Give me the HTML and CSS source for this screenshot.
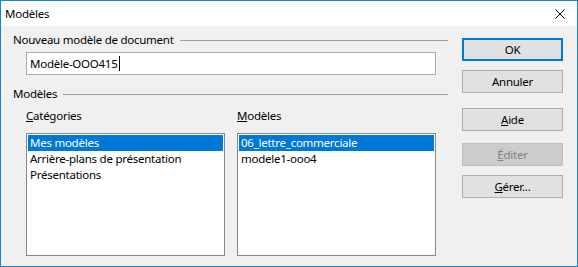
FILE: index.html
```html
<!DOCTYPE html>
<html lang="fr">

<head>
    <meta charset="UTF-8">
    <title>Modèles</title>
    <link rel="stylesheet" href="styles.css">
</head>

<body>
    <div class="dialog">
        <div class="titlebar">
            <span class="title">Modèles</span>
            <svg class="close" width="10" height="10" viewBox="0 0 10 10">
                <path d="M0.5 0.5 L9.5 9.5 M9.5 0.5 L0.5 9.5" stroke="#000" stroke-width="1" fill="none" />
            </svg>
        </div>

        <div class="content">
            <div class="main">
                <div class="group-title">Nouveau modèle de document</div>
                <div class="name-input">Modèle-OOO415<span class="caret"></span></div>

                <div class="group-title second-group">Modèles</div>
                <div class="columns">
                    <div class="column">
                        <div class="list-label"><u>C</u>atégories</div>
                        <div class="list">
                            <div class="row selected">Mes modèles</div>
                            <div class="row">Arrière-plans de présentation</div>
                            <div class="row">Présentations</div>
                        </div>
                    </div>
                    <div class="column">
                        <div class="list-label"><u>M</u>odèles</div>
                        <div class="list">
                            <div class="row selected">06_lettre_commerciale</div>
                            <div class="row">modele1-ooo4</div>
                        </div>
                    </div>
                </div>
            </div>

            <div class="buttons">
                <button class="btn btn-ok">OK</button>
                <button class="btn btn-cancel">Annuler</button>
                <button class="btn btn-help"><u>A</u>ide</button>
                <button class="btn btn-edit" disabled><u>É</u>diter</button>
                <button class="btn btn-manage"><u>G</u>érer...</button>
            </div>
        </div>
    </div>
</body>

</html>
```

FILE: styles.css
```css
body {
    margin: 0;
    font-family: "Noto Sans", "Open Sans", sans-serif;
    font-size: 11.5px;
    letter-spacing: -0.25px;
    color: #000;
    background: #f0f0f0;
}

.dialog {
    width: 578px;
    height: 267px;
    box-sizing: border-box;
    border: 1px solid #1883d7;
    display: flex;
    flex-direction: column;
}

.titlebar {
    height: 25px;
    background: #fff;
    display: flex;
    align-items: center;
    justify-content: space-between;
    padding: 0 12px 0 4px;
}

.title {
    line-height: 16px;
}

.content {
    flex: 1;
    background: #f0f0f0;
    display: flex;
    padding: 6px 0 0 12px;
}

.main {
    width: 435px;
}

.group-title {
    display: flex;
    align-items: center;
    height: 16px;
    line-height: 16px;
    white-space: nowrap;
}

.group-title::after {
    content: "";
    flex: 1;
    height: 1px;
    background: #a0a0a0;
    margin-left: 6px;
}

.second-group {
    margin-top: 11px;
}

.name-input {
    display: flex;
    align-items: center;
    margin: 4px 0 0 13px;
    width: 410px;
    height: 23px;
    box-sizing: border-box;
    border: 1px solid #adadad;
    background: #fff;
    padding: 0 3px;
}

.caret {
    width: 1px;
    height: 15px;
    background: #000;
    margin-left: 1px;
}

.columns {
    display: flex;
    gap: 12px;
    padding-left: 13px;
    margin-top: 6px;
}

.column {
    width: 199px;
}

.list-label {
    line-height: 16px;
    margin-bottom: 9px;
}

.list {
    height: 123px;
    box-sizing: border-box;
    border: 1px solid #828790;
    background: #fff;
    padding: 1px;
}

.row {
    height: 16px;
    line-height: 16px;
    padding-left: 2px;
    white-space: nowrap;
}

.row.selected {
    background: #0078d7;
    color: #fff;
}

.buttons {
    margin-left: 14px;
    width: 101px;
    display: flex;
    flex-direction: column;
}

.btn {
    height: 23px;
    box-sizing: border-box;
    border: 1px solid #adadad;
    background: #e1e1e1;
    font-family: inherit;
    font-size: 11.5px;
    letter-spacing: -0.25px;
    color: #000;
    padding: 0;
}

.btn-ok {
    margin-top: 6px;
    border: 2px solid #0078d7;
}

.btn-cancel {
    margin-top: 9px;
}

.btn-help {
    margin-top: 15px;
}

.btn-edit {
    margin-top: 12px;
    background: #cccccc;
    border-color: #bfbfbf;
    color: #838383;
}

.btn-manage {
    margin-top: 9px;
}
```
